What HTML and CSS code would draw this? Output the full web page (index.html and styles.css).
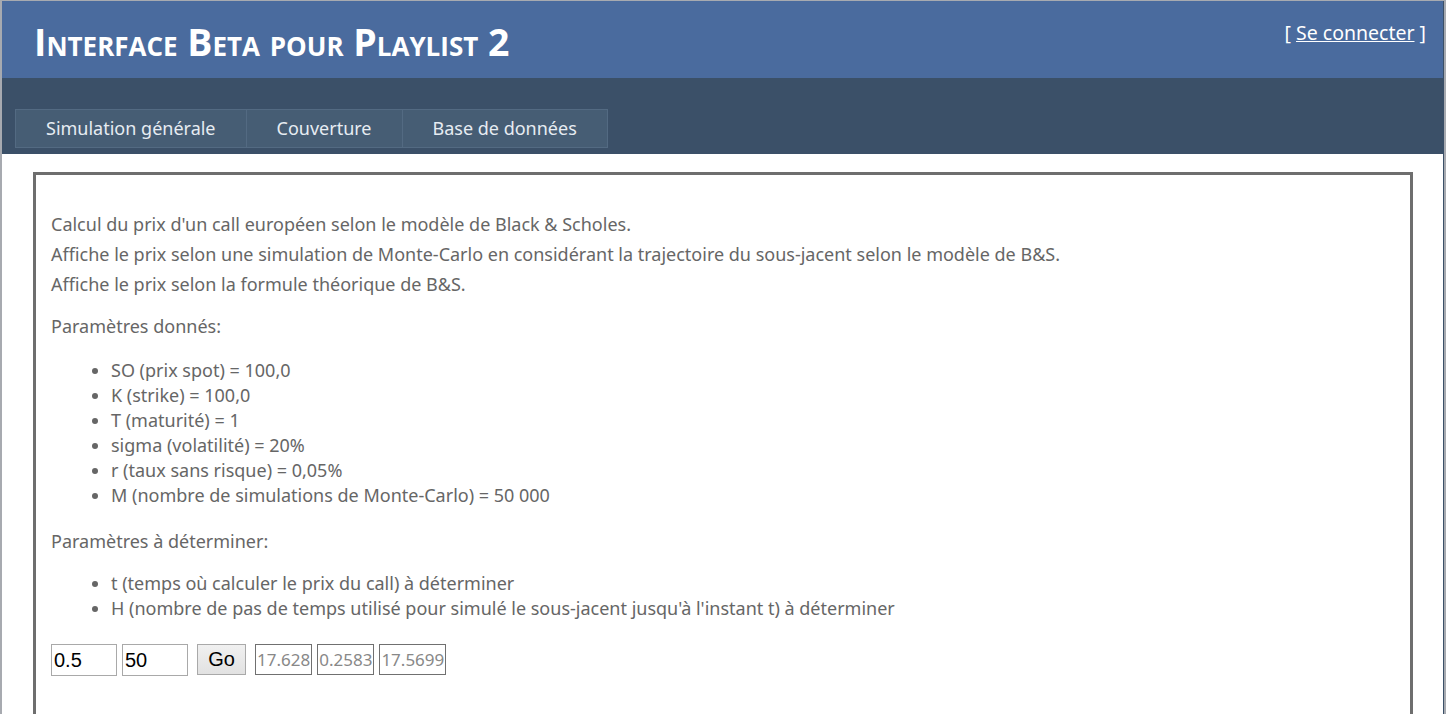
FILE: index.html
```html
<!DOCTYPE html>
<html lang="fr">
<head>
<meta charset="utf-8">
<title>Interface Beta pour Playlist 2</title>
<link rel="stylesheet" href="styles.css">
</head>
<body>
<div class="page">
  <header class="header">
    <h1 class="title">Interface Beta pour Playlist 2</h1>
    <div class="login">[ <a href="#">Se connecter</a> ]</div>
  </header>
  <nav class="nav">
    <ul class="tabs">
      <li class="tab">Simulation générale</li>
      <li class="tab">Couverture</li>
      <li class="tab">Base de données</li>
    </ul>
  </nav>
  <main class="main">
    <section class="box">
      <div class="intro">
        <div>Calcul du prix d'un call européen selon le modèle de Black &amp; Scholes.</div>
        <div>Affiche le prix selon une simulation de Monte-Carlo en considérant la trajectoire du sous-jacent selon le modèle de B&amp;S.</div>
        <div>Affiche le prix selon la formule théorique de B&amp;S.</div>
      </div>
      <p class="label">Paramètres donnés:</p>
      <ul class="params">
        <li>SO (prix spot) = 100,0</li>
        <li>K (strike) = 100,0</li>
        <li>T (maturité) = 1</li>
        <li>sigma (volatilité) = 20%</li>
        <li>r (taux sans risque) = 0,05%</li>
        <li>M (nombre de simulations de Monte-Carlo) = 50 000</li>
      </ul>
      <p class="label label-2">Paramètres à déterminer:</p>
      <ul class="params">
        <li>t (temps où calculer le prix du call) à déterminer</li>
        <li>H (nombre de pas de temps utilisé pour simulé le sous-jacent jusqu'à l'instant t) à déterminer</li>
      </ul>
      <div class="controls">
        <input class="field" type="text" value="0.5">
        <input class="field" type="text" value="50">
        <button class="go" type="button">Go</button>
        <span class="out">17.628</span>
        <span class="out">0.2583</span>
        <span class="out">17.5699</span>
      </div>
    </section>
  </main>
</div>
</body>
</html>
```

FILE: styles.css
```css
html, body {
  margin: 0;
  padding: 0;
}
body {
  background: #a7aab0;
  padding-top: 1px;
  height: 713px;
  overflow: hidden;
  font-family: "Noto Sans", "Open Sans", sans-serif;
}
.page {
  margin-left: 2px;
  width: 1441px;
  background: #fff;
  border-right: 1px solid #3b5068;
  height: 713px;
}
.header {
  background: #4a6b9e;
  height: 77px;
  display: flex;
  justify-content: space-between;
  align-items: flex-start;
  padding: 0 17px 0 32px;
}
.title {
  margin: 0;
  padding-top: 16px;
  color: #fff;
  font-family: "Open Sans", sans-serif;
  font-weight: 700;
  font-variant: small-caps;
  font-size: 37.4px;
  line-height: 50px;
  letter-spacing: 0;
}
.login {
  color: #fff;
  font-size: 19.5px;
  padding-top: 19px;
  line-height: 26px;
}
.login a {
  color: #fff;
  text-decoration: underline;
}
.nav {
  background: #3b5068;
  height: 76px;
  padding: 31px 0 0 13px;
  box-sizing: border-box;
}
.tabs {
  list-style: none;
  margin: 0;
  padding: 0;
  display: flex;
}
.tab {
  height: 39px;
  box-sizing: border-box;
  background: #465d74;
  border: 1px solid #536a82;
  border-right: none;
  color: #e6ecf2;
  font-size: 18px;
  line-height: 37px;
  padding: 0 30px;
}
.tab:last-child {
  border-right: 1px solid #536a82;
}
.main {
  padding: 18px 30px 0 31px;
}
.box {
  border: 3px solid #6e6e6e;
  padding: 34px 15px 60px;
  color: #666;
  font-size: 18px;
}
.intro {
  line-height: 30px;
}
.label {
  margin: 15px 0 19px;
  line-height: 25px;
}
.label-2 {
  margin-top: 21px;
  margin-bottom: 17px;
}
.params {
  margin: 0;
  padding-left: 60px;
  line-height: 25px;
}
.controls {
  margin-top: 23px;
  display: flex;
  align-items: flex-start;
  gap: 5px;
}
.field {
  width: 66px;
  height: 32px;
  box-sizing: border-box;
  border: 1px solid #a9a9a9;
  font-family: "Liberation Sans", Arial, sans-serif;
  font-size: 20px;
  padding: 0 2px;
  color: #000;
}
.go {
  margin-left: 4px;
  margin-right: 4px;
  width: 49px;
  height: 31px;
  border: 1px solid #a9a9a9;
  background: linear-gradient(#f0f0f0, #e2e2e2);
  font-family: "Liberation Sans", Arial, sans-serif;
  font-size: 20px;
  color: #000;
  padding: 0;
}
.out {
  height: 31px;
  box-sizing: border-box;
  border: 1px solid #707070;
  color: #888;
  font-size: 17px;
  line-height: 29px;
  padding: 0 1px;
}
```
